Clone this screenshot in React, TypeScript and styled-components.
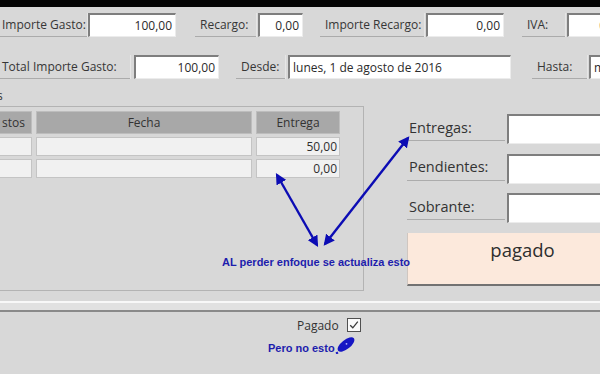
import React from "react";
import styled, { createGlobalStyle } from "styled-components";

const Global = createGlobalStyle`
  html, body { margin: 0; padding: 0; background: #d8d8d8; }
  #root { width: 600px; height: 374px; }
`;

const Page = styled.div`
  position: relative;
  width: 600px;
  height: 374px;
  overflow: hidden;
  background: #d8d8d8;
  font-family: "Open Sans", "Noto Sans", sans-serif;
  color: #363636;
`;

const TopBar = styled.div`
  height: 7px;
  background: #050505;
`;

const FieldRow = styled.div<{ $top: number }>`
  display: flex;
  height: 24px;
  margin-top: ${(p) => p.$top}px;
  white-space: nowrap;
`;

const FieldLabel = styled.div<{ $w: number; $ml: number }>`
  flex: none;
  box-sizing: border-box;
  width: ${(p) => p.$w}px;
  margin-left: ${(p) => p.$ml}px;
  padding-left: 5px;
  display: flex;
  align-items: center;
  font-size: 12px;
  border-bottom: 1px solid #ababab;
  box-shadow: 1px 0 0 #e6e6e6;
`;

const Field = styled.div<{ $w: number; $ml: number; $align?: "left" | "right"; $h?: number }>`
  flex: none;
  box-sizing: border-box;
  width: ${(p) => p.$w}px;
  height: ${(p) => p.$h ?? 24}px;
  margin-left: ${(p) => p.$ml}px;
  background: #ffffff;
  border-top: 2px solid #7e7e7e;
  border-left: 2px solid #7e7e7e;
  border-right: 1px solid #ececec;
  border-bottom: 1px solid #ececec;
  padding: 0 3px;
  display: flex;
  align-items: center;
  justify-content: ${(p) => (p.$align === "left" ? "flex-start" : "flex-end")};
  font-size: 12px;
  color: #2a2a2a;
  overflow: hidden;
`;

const Fragment = styled.div`
  margin-top: 10px;
  margin-left: -3px;
  height: 13px;
  line-height: 13px;
  font-size: 12px;
`;

const Main = styled.div`
  display: flex;
  align-items: flex-start;
  margin-top: 4px;
`;

const Subform = styled.div`
  flex: none;
  box-sizing: border-box;
  width: 364px;
  height: 185px;
  border-top: 1px solid #b3b3b3;
  border-right: 1px solid #b3b3b3;
  border-bottom: 1px solid #b3b3b3;
  padding-top: 4px;
`;

const Grid = styled.div`
  display: grid;
  grid-template-columns: 40px 216px 84px;
  grid-template-rows: 23px 19px 19px;
  column-gap: 4px;
  row-gap: 3px;
  margin-left: -8px;
`;

const HeadCell = styled.div`
  box-sizing: border-box;
  background: #a8a8a8;
  border: 1px solid #bdbdbd;
  display: flex;
  align-items: center;
  justify-content: center;
  font-size: 12px;
  color: #333;
`;

const HeadCellRight = styled(HeadCell)`
  justify-content: flex-end;
  padding-right: 6px;
`;

const Cell = styled.div`
  box-sizing: border-box;
  background: #f1f1f1;
  border: 1px solid #c4c4c4;
  display: flex;
  align-items: center;
  justify-content: flex-end;
  padding-right: 2px;
  font-size: 12px;
  color: #2e2e2e;
`;

const RightPanel = styled.div`
  display: flex;
  flex-direction: column;
  gap: 9.5px;
  margin-left: 43px;
  padding-top: 8px;
`;

const RightRow = styled.div`
  display: flex;
  height: 30px;
  white-space: nowrap;
`;

const RightLabel = styled.div`
  flex: none;
  box-sizing: border-box;
  width: 98px;
  height: 27px;
  padding-left: 2px;
  display: flex;
  align-items: center;
  font-size: 14.5px;
  color: #333;
  border-bottom: 1px solid #acacac;
`;

const PaidButton = styled.div`
  box-sizing: border-box;
  width: 230px;
  height: 53px;
  background: #fce9dc;
  border-left: 1px solid #cfc6c0;
  border-bottom: 2px solid #727272;
  padding-top: 4px;
  text-align: center;
  font-size: 18.5px;
  line-height: 25px;
  color: #2e2e2e;
`;

const Divider = styled.div`
  margin-top: 10px;
  height: 7px;
  background: #e1e1e1;
  border-top: 2px solid #f8f8f8;
  border-bottom: 2px solid #8a8a8a;
`;

const PagadoRow = styled.div`
  display: flex;
  align-items: center;
  height: 14px;
  margin-top: 6px;
  padding-left: 297px;
  font-size: 12px;
  color: #333;
`;

const CheckBox = styled.div`
  box-sizing: border-box;
  width: 14px;
  height: 14px;
  margin-left: 8px;
  background: #fafafa;
  border: 1px solid #505050;
  display: flex;
  align-items: center;
  justify-content: center;
`;

const NoteRow = styled.div`
  display: flex;
  align-items: flex-start;
  height: 20px;
  margin-top: 3px;
  padding-left: 268px;
`;

const NoteText = styled.div`
  margin-top: 7px;
  font-family: "Liberation Sans", Arial, sans-serif;
  font-weight: bold;
  font-size: 11px;
  line-height: 13px;
  color: #1d1dad;
  white-space: nowrap;
`;

const Overlay = styled.svg`
  position: absolute;
  left: 0;
  top: 0;
  width: 600px;
  height: 374px;
  pointer-events: none;
`;

const Callout = styled(NoteText)`
  position: absolute;
  left: 222px;
  top: 256px;
  margin-top: 0;
`;

export default function App() {
  return (
    <Page>
      <Global />
      <TopBar />
      <FieldRow $top={6}>
        <FieldLabel $w={90} $ml={-3}>Importe Gasto:</FieldLabel>
        <Field $w={88} $ml={1}>100,00</Field>
        <FieldLabel $w={61} $ml={19}>Recargo:</FieldLabel>
        <Field $w={45} $ml={2}>0,00</Field>
        <FieldLabel $w={104} $ml={17}>Importe Recargo:</FieldLabel>
        <Field $w={78} $ml={2}>0,00</Field>
        <FieldLabel $w={43} $ml={18}>IVA:</FieldLabel>
        <Field $w={60} $ml={2}>0,00</Field>
      </FieldRow>
      <FieldRow $top={18}>
        <FieldLabel $w={133} $ml={-3}>Total Importe Gasto:</FieldLabel>
        <Field $w={85} $ml={4}>100,00</Field>
        <FieldLabel $w={49} $ml={17}>Desde:</FieldLabel>
        <Field $w={223} $ml={3} $align="left">lunes, 1 de agosto de 2016</Field>
        <FieldLabel $w={55} $ml={21}>Hasta:</FieldLabel>
        <Field $w={200} $ml={2} $align="left">martes, 31 de agosto de 2016</Field>
      </FieldRow>
      <Fragment>s</Fragment>
      <Main>
        <Subform>
          <Grid>
            <HeadCellRight>stos</HeadCellRight>
            <HeadCell>Fecha</HeadCell>
            <HeadCell>Entrega</HeadCell>
            <Cell />
            <Cell />
            <Cell>50,00</Cell>
            <Cell />
            <Cell />
            <Cell>0,00</Cell>
          </Grid>
        </Subform>
        <RightPanel>
          <RightRow>
            <RightLabel>Entregas:</RightLabel>
            <Field $w={130} $ml={2} $h={30} />
          </RightRow>
          <RightRow>
            <RightLabel>Pendientes:</RightLabel>
            <Field $w={130} $ml={2} $h={30} />
          </RightRow>
          <RightRow>
            <RightLabel>Sobrante:</RightLabel>
            <Field $w={130} $ml={2} $h={30} />
          </RightRow>
          <PaidButton>pagado</PaidButton>
        </RightPanel>
      </Main>
      <Divider />
      <PagadoRow>
        Pagado
        <CheckBox>
          <svg width="10" height="10" viewBox="0 0 10 10">
            <path d="M1.2 5.2 L3.8 7.8 L8.8 1.6" fill="none" stroke="#3a3a3a" strokeWidth="1.3" />
          </svg>
        </CheckBox>
      </PagadoRow>
      <NoteRow>
        <NoteText>Pero no esto</NoteText>
        <svg width="22" height="19" viewBox="0 0 22 19">
          <ellipse cx="11" cy="9.5" rx="10" ry="4.6" transform="rotate(-38 11 9.5)" fill="#1616c4" />
          <path d="M3 17.5 L1 18.5" stroke="#1616c4" strokeWidth="2" />
          <circle cx="11.5" cy="8.8" r="0.9" fill="#b8b8ff" />
        </svg>
      </NoteRow>
      <Overlay viewBox="0 0 600 374">
        <defs>
          <marker id="ah" viewBox="0 0 10 10" refX="8" refY="5" markerWidth="4.6" markerHeight="4.6" orient="auto-start-reverse">
            <path d="M0 0 L10 5 L0 10 Z" fill="#0c0cb4" />
          </marker>
        </defs>
        <line x1="277" y1="175" x2="317" y2="245" stroke="#0c0cb4" strokeWidth="2.4" markerStart="url(#ah)" markerEnd="url(#ah)" />
        <line x1="325" y1="244" x2="408" y2="138" stroke="#0c0cb4" strokeWidth="2.4" markerStart="url(#ah)" markerEnd="url(#ah)" />
      </Overlay>
      <Callout>AL perder enfoque se actualiza esto</Callout>
    </Page>
  );
}
